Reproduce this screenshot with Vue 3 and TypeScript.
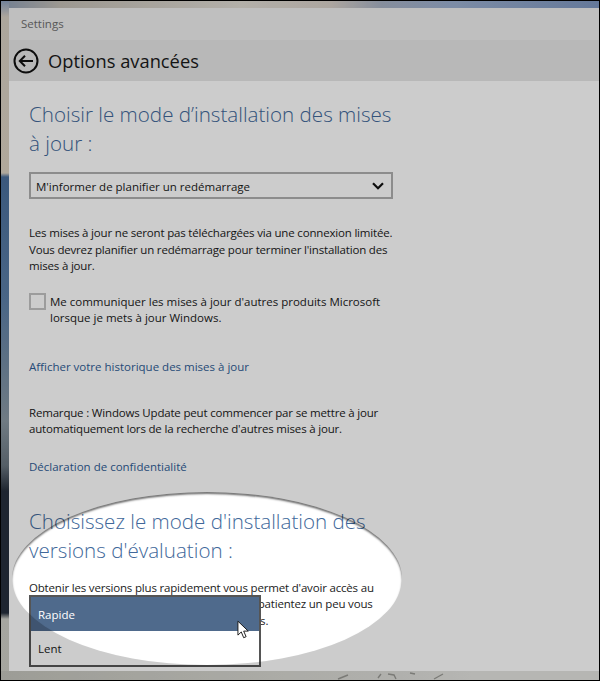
<script setup lang="ts">
const selected = "M'informer de planifier un redémarrage";
const options = [
    { label: 'Rapide', active: true },
    { label: 'Lent', active: false },
];
</script>

<template>
    <div class="screen">
        <div class="window">
            <div class="title-bar">Settings</div>
            <div class="header">
                <svg class="back" width="26" height="26" viewBox="0 0 26 26" fill="none" stroke="#111" stroke-width="2">
                    <circle cx="13" cy="13" r="11.5" />
                    <path d="M20 13H7M12 7.8 6.8 13l5.2 5.2" />
                </svg>
                <span class="page-title">Options avancées</span>
            </div>
            <div class="content">
                <h2 class="heading">Choisir le mode d’installation des mises<br />à jour :</h2>
                <div class="select">
                    <span>{{ selected }}</span>
                    <svg width="12" height="8" viewBox="0 0 12 8" fill="none" stroke="#111" stroke-width="2.2">
                        <path d="M1 1.2 6 6.2l5-5" />
                    </svg>
                </div>
                <p class="text tight limited">
                    Les mises à jour ne seront pas téléchargées via une connexion limitée.<br />
                    Vous devrez planifier un redémarrage pour terminer l'installation des<br />
                    mises à jour.
                </p>
                <div class="check-row">
                    <span class="checkbox"></span>
                    <p class="text label">
                        Me communiquer les mises à jour d'autres produits Microsoft<br />
                        lorsque je mets à jour Windows.
                    </p>
                </div>
                <a class="link history">Afficher votre historique des mises à jour</a>
                <p class="text tight note">
                    Remarque : Windows Update peut commencer par se mettre à jour<br />
                    automatiquement lors de la recherche d'autres mises à jour.
                </p>
                <a class="link privacy">Déclaration de confidentialité</a>
                <h2 class="heading second">Choisissez le mode d'installation des<br />versions d'évaluation :</h2>
                <div class="insider">
                    <p class="text tight">
                        Obtenir les versions plus rapidement vous permet d'avoir accès au<br />
                        dernières nouveautés très vite, mais si vous patientez un peu vous<br />
                        obtiendrez plus tard des versions plus stables.
                    </p>
                    <ul class="popup">
                        <li v-for="o in options" :key="o.label" :class="{ active: o.active }">{{ o.label }}</li>
                    </ul>
                </div>
            </div>
        </div>
        <svg class="marks" width="130" height="9" viewBox="0 0 130 9" fill="none" stroke="#9a9a95" stroke-width="1.4">
            <path d="M4 8 14 4M44 7l3-4M54 3l6 1 2 4M76 2l5 1M100 8l9-5" />
        </svg>
        <div class="spotlight"></div>
        <svg class="cursor" width="13" height="20" viewBox="0 0 14 21">
            <path d="M1 1v15l3.6-3.4 2.6 6.2 2.6-1.1-2.6-6h4.9z" fill="#fff" stroke="#111" stroke-width="1" />
        </svg>
    </div>
</template>

<style>
body {
    margin: 0;
}
</style>

<style scoped>
.screen {
    position: relative;
    width: 600px;
    height: 681px;
    box-sizing: border-box;
    overflow: hidden;
    border: 1px solid #000;
    padding: 7px 0 9px 8px;
    font-family: 'Open Sans', 'Noto Sans', sans-serif;
    background: linear-gradient(90deg, #8f9fb6 0, #c4bfb6 60px, #e0dcd4 240px, #d8d0c8 330px, #a8b2c4 380px, #9cb0d0 450px, #7e97c0 600px);
    display: flex;
}

.screen::before {
    content: '';
    position: absolute;
    left: 0;
    top: 0;
    width: 8px;
    height: 100%;
    background: linear-gradient(
        180deg,
        #8ea2c0 0,
        #d8d0c4 16px,
        #dcd2c2 172px,
        #4a6f9c 176px,
        #5d80a8 300px,
        #8c9aa4 420px,
        #6a7680 465px,
        #262f3c 490px,
        #262f3c 612px,
        #d0d0c8 618px,
        #cfcfc6 100%
    );
}

.screen::after {
    content: '';
    position: absolute;
    left: 0;
    right: 0;
    bottom: 0;
    height: 9px;
    background: linear-gradient(90deg, #c4c4bc, #d8d8d2 300px, #dcdcd8 390px, #e4e4e0 470px, #e4e4e0);
}

.window {
    position: relative;
    z-index: 1;
    flex: 1;
    display: flex;
    flex-direction: column;
    background: #fff;
}

.title-bar {
    height: 32px;
    flex: none;
    box-sizing: border-box;
    padding: 7px 0 0 12px;
    font-size: 11.5px;
    line-height: 17px;
    color: #6e6e6e;
    background: #efefef;
}

.header {
    height: 41px;
    flex: none;
    display: flex;
    align-items: center;
    gap: 9px;
    padding-left: 4px;
    background: #e6e6e6;
}

.back {
    flex: none;
}

.page-title {
    font-size: 18.3px;
    color: #1a1a1a;
}

.content {
    position: relative;
    flex: 1;
    padding: 19px 0 0 20px;
}

.heading {
    margin: 0;
    font-weight: 300;
    font-size: 20.6px;
    line-height: 29px;
    color: #41689a;
}

.select {
    width: 364px;
    height: 27px;
    box-sizing: border-box;
    margin-top: 14px;
    padding: 1px 7px 0 5px;
    display: flex;
    align-items: center;
    justify-content: space-between;
    border: 2px solid #b0b0b0;
    font-size: 11.5px;
    color: #1a1a1a;
}

.text {
    margin: 0;
    font-size: 11.5px;
    line-height: 16.5px;
    color: #1a1a1a;
}

.tight {
    letter-spacing: -0.18px;
}

.limited {
    margin-top: 26px;
}

.check-row {
    display: flex;
    gap: 4px;
    margin-top: 18px;
}

.label {
    padding-top: 1px;
}

.checkbox {
    width: 17px;
    height: 17px;
    flex: none;
    box-sizing: border-box;
    border: 2px solid #c4c4c4;
}

.link {
    display: block;
    font-size: 11.5px;
    line-height: 17px;
    color: #2f5d96;
}

.history {
    margin-top: 31px;
}

.note {
    margin-top: 30px;
}

.privacy {
    margin-top: 20px;
}

.second {
    margin-top: 32px;
}

.insider {
    position: relative;
    margin-top: 15px;
}

.popup {
    position: absolute;
    left: 0;
    top: 15px;
    width: 232px;
    box-sizing: border-box;
    margin: 0;
    padding: 0;
    list-style: none;
    border: 2px solid #555;
    background: #fff;
    font-size: 11.5px;
    color: #1a1a1a;
}

.popup li {
    height: 34px;
    box-sizing: border-box;
    padding: 2px 0 0 7px;
    display: flex;
    align-items: center;
}

.popup li.active {
    background: #4f6a8c;
    color: #fff;
}

.marks {
    position: absolute;
    z-index: 1;
    left: 333px;
    bottom: 0;
}

.spotlight {
    position: absolute;
    z-index: 2;
    left: 11px;
    top: 491px;
    width: 390px;
    height: 173px;
    border-radius: 50%;
    box-shadow:
        0 0 0 700px rgba(0, 0, 0, 0.2),
        inset 0 2px 2px rgba(0, 0, 0, 0.55);
}

.cursor {
    position: absolute;
    z-index: 3;
    left: 236px;
    top: 619px;
}
</style>
